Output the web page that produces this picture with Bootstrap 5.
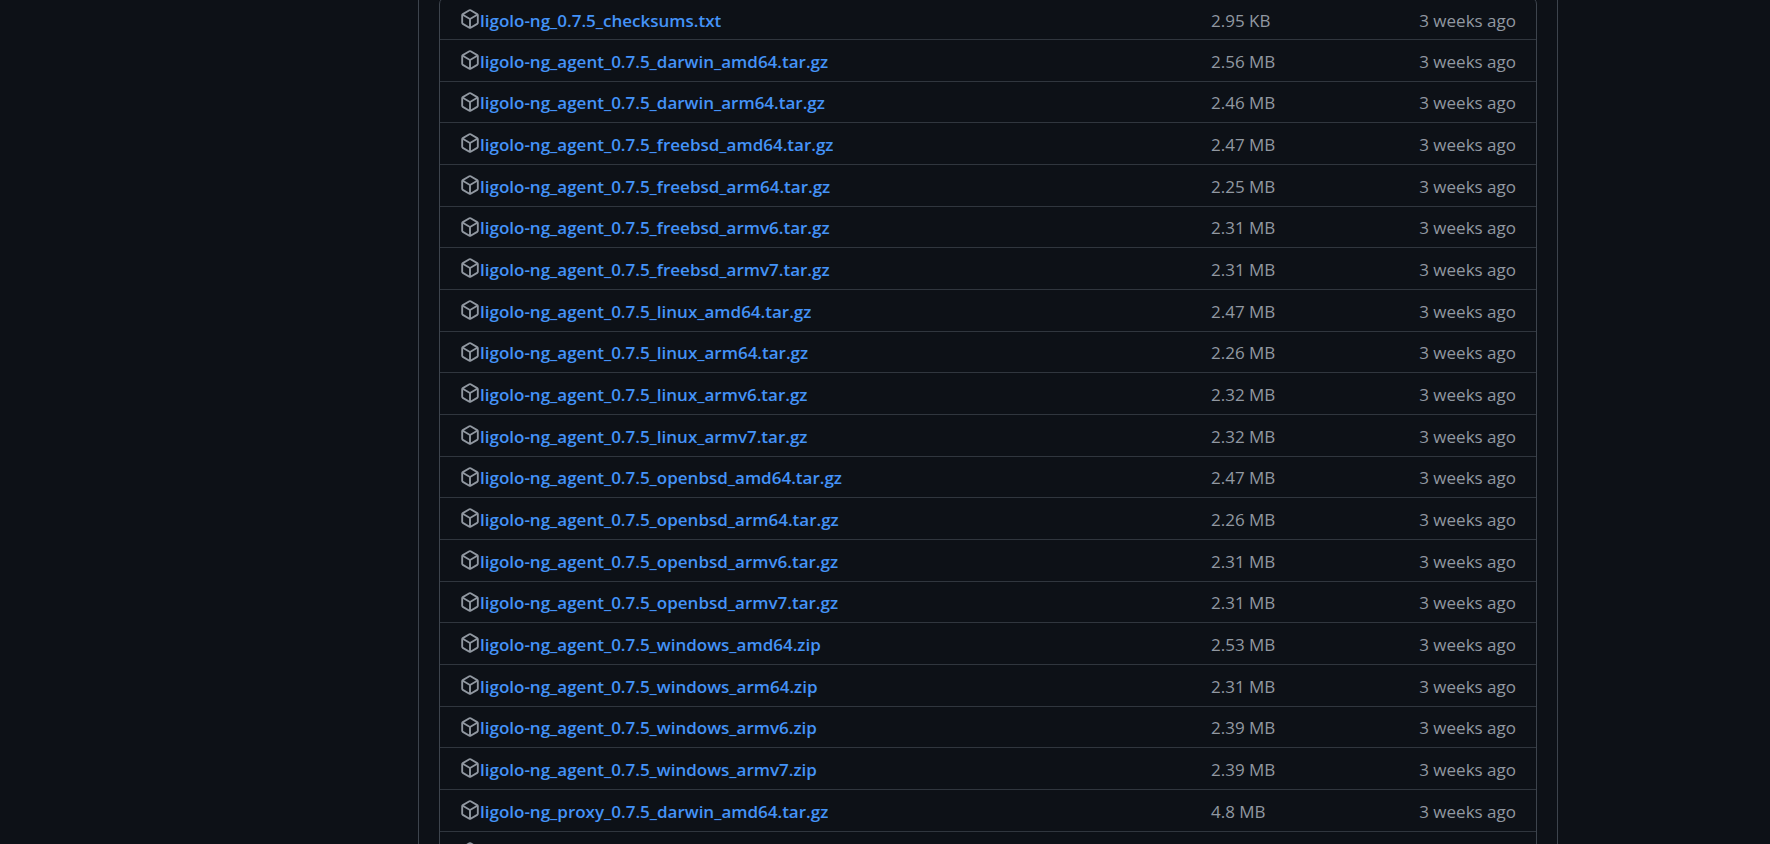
<!DOCTYPE html>
<html lang="en" data-bs-theme="dark">
<head>
<meta charset="utf-8">
<meta name="viewport" content="width=device-width, initial-scale=1">
<title>Release assets</title>
<link href="https://cdn.jsdelivr.net/npm/bootstrap@5.3.0/dist/css/bootstrap.min.css" rel="stylesheet">
<style>
body { background: #0d1117; color: #9198a1; font-family: "Open Sans", "Noto Sans", sans-serif; font-size: 17px; line-height: 24px; }
.release-page { max-width: 1346px; height: 100vh; }
.release-side { flex: 0 0 206px; }
.release-body { border: solid #3d444d; border-width: 0 1px; padding: 0 20px; }
.asset-list { --bs-list-group-bg: transparent; --bs-list-group-color: #9198a1; margin-top: -3px; border: 1px solid #3d444d; border-radius: 7px; }
.asset-row { height: 42px; padding: 2px 20px 0; border: 0; border-bottom: 1px solid #30363e; }
.asset-row:nth-child(3n) { height: 41px; }
.asset-row:first-child { padding-top: 4px; }
.asset-icon { width: 20px; height: 20px; fill: #9198a1; margin-bottom: 3px; }
.asset-link { color: #4493f8; font-weight: 600; }
.asset-meta { flex: 0 0 305px; }
</style>
</head>
<body>
<svg class="d-none" aria-hidden="true"><symbol id="package" viewBox="0 0 16 16"><path d="m8.878.392 5.25 3.045c.54.314.872.89.872 1.514v6.098a1.75 1.75 0 0 1-.872 1.514l-5.25 3.045a1.75 1.75 0 0 1-1.756 0l-5.25-3.045A1.75 1.75 0 0 1 1 11.049V4.951c0-.624.332-1.201.872-1.514L7.122.392a1.75 1.75 0 0 1 1.756 0ZM7.875 1.69l-4.63 2.685L8 7.133l4.755-2.758-4.63-2.685a.248.248 0 0 0-.25 0ZM2.5 5.677v5.372c0 .09.047.171.125.216l4.625 2.683V8.432Zm6.25 8.271 4.625-2.683a.25.25 0 0 0 .125-.216V5.677L8.75 8.432Z"/></symbol></svg>
<div class="release-page d-flex mx-auto overflow-hidden">
  <div class="release-side d-none d-md-block"></div>
  <main class="release-body flex-grow-1 overflow-hidden">
    <ul class="asset-list list-group" id="assets"></ul>
  </main>
</div>
<script src="https://cdn.jsdelivr.net/npm/bootstrap@5.3.0/dist/js/bootstrap.bundle.min.js"></script>
<script>
const assets = [
  ["0.7.5_checksums.txt", "2.95 KB"],
  ["agent_0.7.5_darwin_amd64.tar.gz", "2.56 MB"],
  ["agent_0.7.5_darwin_arm64.tar.gz", "2.46 MB"],
  ["agent_0.7.5_freebsd_amd64.tar.gz", "2.47 MB"],
  ["agent_0.7.5_freebsd_arm64.tar.gz", "2.25 MB"],
  ["agent_0.7.5_freebsd_armv6.tar.gz", "2.31 MB"],
  ["agent_0.7.5_freebsd_armv7.tar.gz", "2.31 MB"],
  ["agent_0.7.5_linux_amd64.tar.gz", "2.47 MB"],
  ["agent_0.7.5_linux_arm64.tar.gz", "2.26 MB"],
  ["agent_0.7.5_linux_armv6.tar.gz", "2.32 MB"],
  ["agent_0.7.5_linux_armv7.tar.gz", "2.32 MB"],
  ["agent_0.7.5_openbsd_amd64.tar.gz", "2.47 MB"],
  ["agent_0.7.5_openbsd_arm64.tar.gz", "2.26 MB"],
  ["agent_0.7.5_openbsd_armv6.tar.gz", "2.31 MB"],
  ["agent_0.7.5_openbsd_armv7.tar.gz", "2.31 MB"],
  ["agent_0.7.5_windows_amd64.zip", "2.53 MB"],
  ["agent_0.7.5_windows_arm64.zip", "2.31 MB"],
  ["agent_0.7.5_windows_armv6.zip", "2.39 MB"],
  ["agent_0.7.5_windows_armv7.zip", "2.39 MB"],
  ["proxy_0.7.5_darwin_amd64.tar.gz", "4.8 MB"],
  ["", ""]
];
document.getElementById("assets").innerHTML = assets.map(([name, size]) => `
  <li class="asset-row list-group-item d-flex align-items-center">
    <svg class="asset-icon flex-shrink-0" aria-hidden="true"><use href="#package"/></svg>
    ${name ? `<a class="asset-link text-decoration-none text-truncate" href="#">ligolo-ng_${name}</a>
    <div class="asset-meta d-flex justify-content-between ms-auto"><span>${size}</span><span>3 weeks ago</span></div>` : ""}
  </li>`).join("");
</script>
</body>
</html>
